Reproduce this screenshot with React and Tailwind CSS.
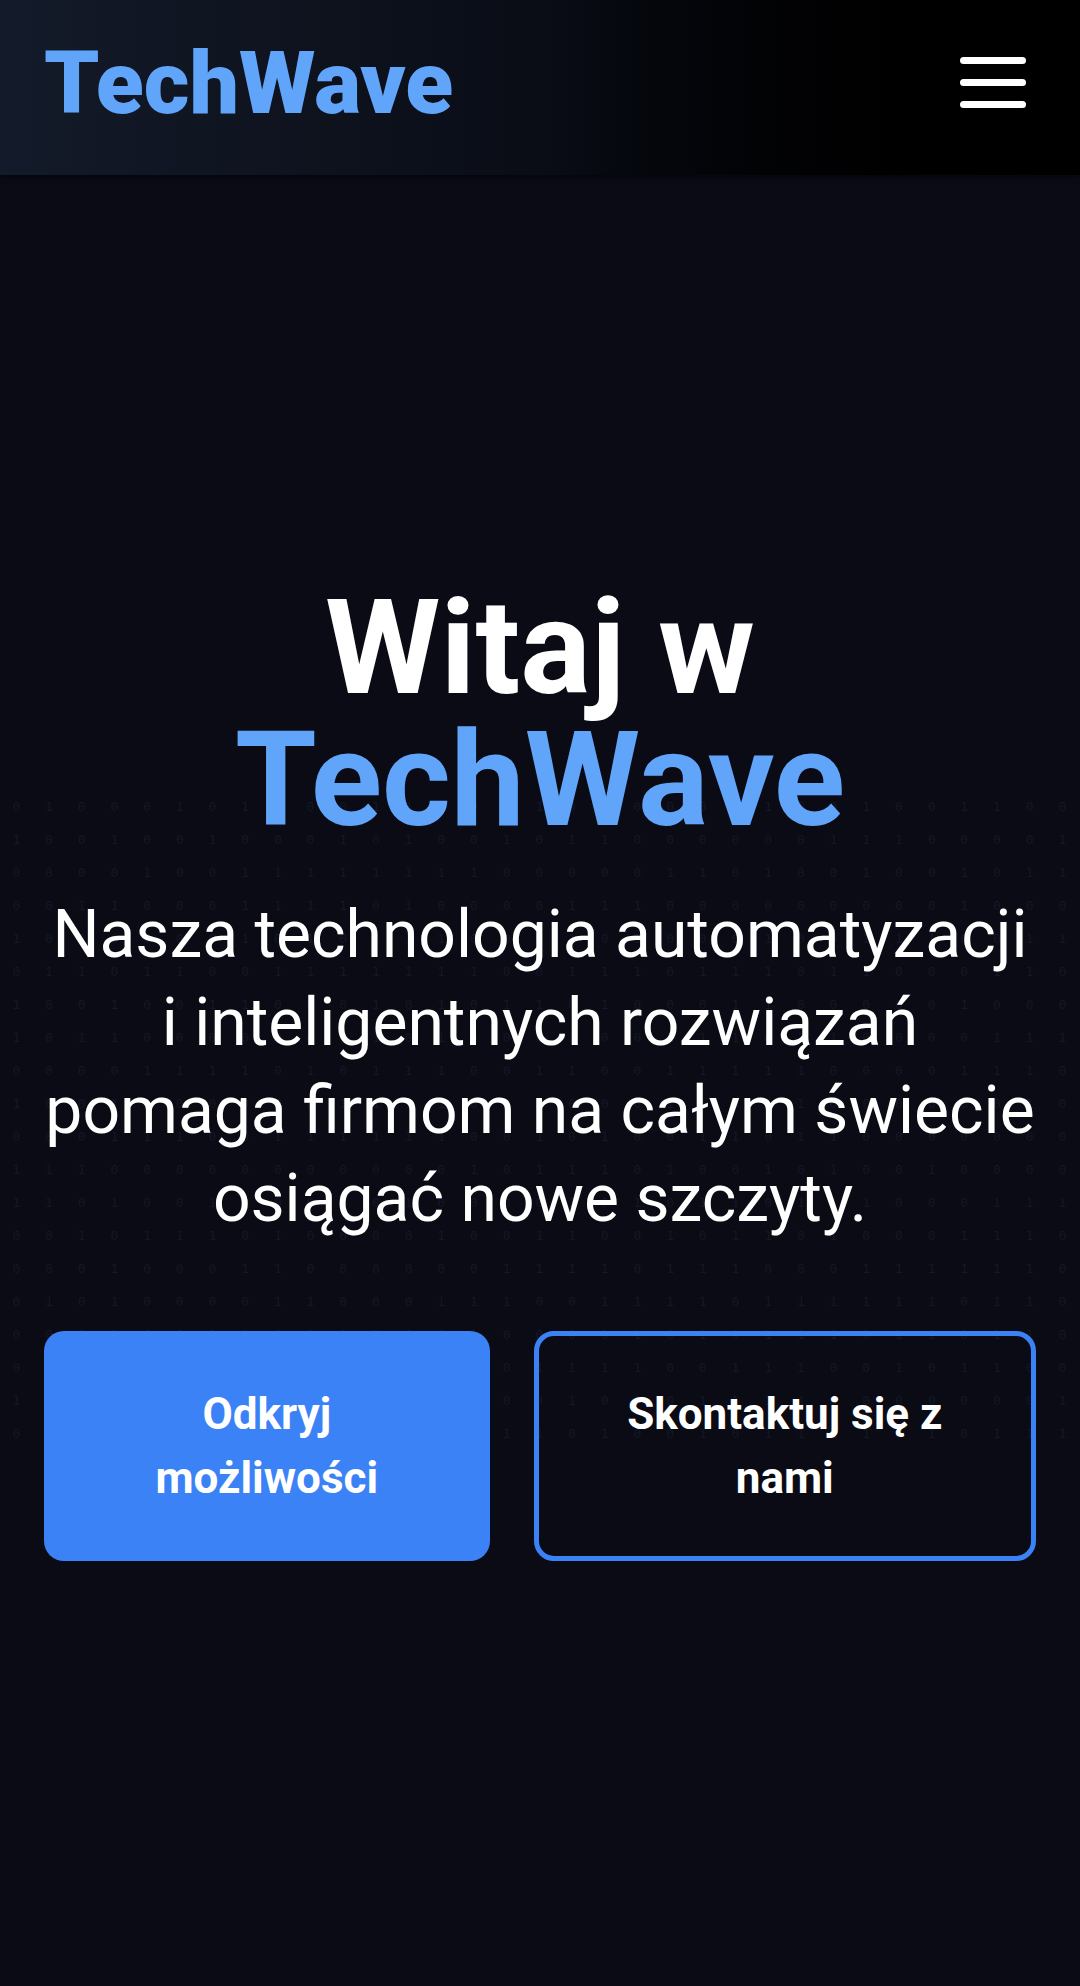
import React from "react";

function BinaryPattern() {
  const rows = 20;
  const cols = 33;
  let seed = 7;
  const rnd = () => {
    seed = (seed * 9301 + 49297) % 233280;
    return seed / 233280;
  };
  const lines = [];
  for (let r = 0; r < rows; r++) {
    const cells = [];
    for (let c = 0; c < cols; c++) {
      cells.push(rnd() > 0.5 ? "1" : "0");
    }
    lines.push(cells);
  }
  return (
    <div className="pointer-events-none absolute left-0 right-0 top-[790px] flex flex-col overflow-hidden select-none" aria-hidden="true">
      {lines.map((cells, i) => (
        <div key={i} className="flex h-[33px] items-center">
          {cells.map((ch, j) => (
            <span
              key={j}
              className="w-[32.7px] shrink-0 text-center text-[13px] leading-none text-[#141826]"
              style={{ fontFamily: '"DejaVu Sans Mono", monospace' }}
            >
              {ch}
            </span>
          ))}
        </div>
      ))}
    </div>
  );
}

export default function App() {
  return (
    <div
      className="relative min-h-[1986px] w-[1080px] overflow-hidden bg-[#0a0b14] text-white"
      style={{ fontFamily: 'Roboto, "Noto Sans", sans-serif' }}
    >
      <BinaryPattern />
      <header className="relative z-10 flex h-[175px] items-center justify-between bg-gradient-to-r from-[#131a29] via-[#0a0d16] to-black px-[44px] pb-[10px] shadow-[0_2px_6px_rgba(0,0,0,0.5)]">
        <div className="text-[88px] font-black leading-none text-[#60a5fa]">TechWave</div>
        <button className="flex flex-col gap-[15px] p-[10px]">
          <span className="block h-[7px] w-[66px] rounded-full bg-white" />
          <span className="block h-[7px] w-[66px] rounded-full bg-white" />
          <span className="block h-[7px] w-[66px] rounded-full bg-white" />
        </button>
      </header>

      <main className="relative z-10 flex flex-col items-center px-[44px] pt-[407px]">
        <h1 className="text-center text-[132px] font-bold leading-[132px]">
          <span className="block text-white">Witaj w</span>
          <span className="block text-[#60a5fa]">TechWave</span>
        </h1>
        <p className="mt-[45px] text-center text-[66px] leading-[88px] text-white">
          <span className="block whitespace-nowrap">Nasza technologia automatyzacji</span>
          <span className="block whitespace-nowrap">i inteligentnych rozwiązań</span>
          <span className="block whitespace-nowrap">pomaga firmom na całym świecie</span>
          <span className="block whitespace-nowrap">osiągać nowe szczyty.</span>
        </p>
        <div className="mt-[88px] flex w-full gap-[44px]">
          <button className="flex h-[230px] w-[446px] items-center justify-center rounded-[20px] bg-[#3b82f6] px-[64px] text-center text-[44px] font-bold leading-[64px] text-white">
            Odkryj możliwości
          </button>
          <button className="flex h-[230px] w-[503px] items-center justify-center rounded-[20px] border-[5px] border-[#3b82f6] bg-transparent px-[60px] text-center text-[44px] font-bold leading-[64px] text-white">
            Skontaktuj się z nami
          </button>
        </div>
      </main>
    </div>
  );
}
